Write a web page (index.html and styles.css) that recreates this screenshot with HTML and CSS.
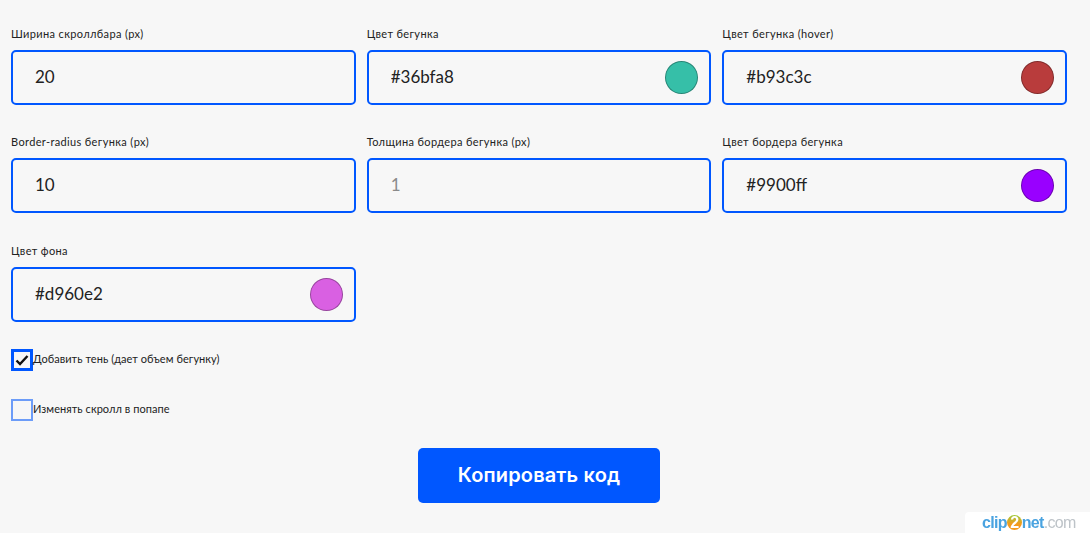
FILE: index.html
```html
<!DOCTYPE html>
<html lang="en">
<head>
    <meta charset="UTF-8">
    <meta name="viewport" content="width=device-width, initial-scale=1.0">
    <title>Scrollbar Generator</title>
    <link rel="stylesheet" href="styles.css">
</head>
<body>
    <div class="generator">
        <div class="fields">
            <div class="field">
                <label class="field-label">Ширина скроллбара (px)</label>
                <div class="field-box"><input class="field-input" type="text" value="20"></div>
            </div>
            <div class="field">
                <label class="field-label">Цвет бегунка</label>
                <div class="field-box">
                    <input class="field-input" type="text" value="#36bfa8">
                    <span class="swatch swatch-thumb"></span>
                </div>
            </div>
            <div class="field">
                <label class="field-label">Цвет бегунка (hover)</label>
                <div class="field-box">
                    <input class="field-input" type="text" value="#b93c3c">
                    <span class="swatch swatch-hover"></span>
                </div>
            </div>
            <div class="field">
                <label class="field-label">Border-radius бегунка (px)</label>
                <div class="field-box"><input class="field-input" type="text" value="10"></div>
            </div>
            <div class="field">
                <label class="field-label">Толщина бордера бегунка (px)</label>
                <div class="field-box"><input class="field-input" type="text" placeholder="1"></div>
            </div>
            <div class="field">
                <label class="field-label">Цвет бордера бегунка</label>
                <div class="field-box">
                    <input class="field-input" type="text" value="#9900ff">
                    <span class="swatch swatch-border"></span>
                </div>
            </div>
            <div class="field">
                <label class="field-label">Цвет фона</label>
                <div class="field-box">
                    <input class="field-input" type="text" value="#d960e2">
                    <span class="swatch swatch-bg"></span>
                </div>
            </div>
        </div>

        <div class="check-row">
            <span class="check-box">
                <svg width="14" height="14" viewBox="0 0 14 14"><path d="M1.5 7.5 L5 11 L12.5 3" fill="none" stroke="#111" stroke-width="2.4"/></svg>
            </span>
            <span class="check-label">Добавить тень (дает объем бегунку)</span>
        </div>
        <div class="check-row">
            <span class="check-box check-off"></span>
            <span class="check-label">Изменять скролл в попапе</span>
        </div>

        <div class="actions">
            <button class="copy-btn">Копировать код</button>
        </div>
    </div>

    <div class="watermark"><span class="wm-blue">clip</span><span class="wm-two">2</span><span class="wm-blue">net</span><span class="wm-gray">.com</span></div>
</body>
</html>
```

FILE: styles.css
```css
body {
    margin: 0;
    height: 533px;
    overflow: hidden;
    background-color: #f7f7f7;
    font-family: Lato, "Noto Sans", sans-serif;
    color: #222;
}

.generator {
    width: 1056px;
    padding: 27px 0 0 11px;
}

.fields {
    display: grid;
    grid-template-columns: repeat(3, 1fr);
    column-gap: 11px;
    row-gap: 30.4px;
}

.field-label {
    display: block;
    height: 23px;
    font-size: 11px;
    line-height: 14px;
    letter-spacing: 0.36px;
}

.field-box {
    display: flex;
    align-items: center;
    height: 55px;
    box-sizing: border-box;
    padding: 0 11px 0 22px;
    border: 2px solid #0057ff;
    border-radius: 5px;
}

.field-input {
    flex: 1;
    min-width: 0;
    padding: 0 0 2px;
    border: none;
    outline: none;
    background: transparent;
    font-family: inherit;
    font-size: 17px;
    color: #222;
}

.field-input::placeholder {
    color: #8a8a8a;
    opacity: 1;
}

.swatch {
    width: 33px;
    height: 33px;
    box-sizing: border-box;
    border-radius: 50%;
    border: 1px solid rgba(0, 0, 0, 0.3);
}

.swatch-thumb { background-color: #36bfa8; }
.swatch-hover { background-color: #b93c3c; }
.swatch-border { background-color: #9900ff; }
.swatch-bg { background-color: #d960e2; }

.check-row {
    display: flex;
    align-items: center;
    height: 22px;
    margin-top: 28px;
}

.fields + .check-row {
    margin-top: 27px;
}

.check-box {
    display: flex;
    align-items: center;
    justify-content: center;
    width: 22px;
    height: 22px;
    box-sizing: border-box;
    border: 3px solid #0057ff;
}

.check-off {
    border: 2px solid #6c9cf8;
}

.check-label {
    padding-bottom: 2px;
    font-size: 11px;
    letter-spacing: 0.06px;
}

.actions {
    display: flex;
    justify-content: center;
    margin-top: 27px;
}

.copy-btn {
    width: 242px;
    height: 55px;
    border: none;
    border-radius: 5px;
    background-color: #0057ff;
    color: #fff;
    font-family: Inter, sans-serif;
    font-size: 20px;
    font-weight: 600;
    letter-spacing: 0.15px;
}

.watermark {
    position: absolute;
    right: 0;
    top: 512px;
    width: 108px;
    height: 21px;
    padding-left: 17px;
    background-color: #fff;
    border-radius: 4px 0 0 0;
    font-family: "Liberation Sans", sans-serif;
    font-size: 16px;
    line-height: 21px;
    letter-spacing: -0.7px;
    filter: blur(0.5px);
}

.wm-blue {
    color: #4aa3e0;
    font-weight: bold;
}

.wm-two {
    display: inline-block;
    width: 15px;
    height: 15px;
    border-radius: 50%;
    background: linear-gradient(#9ccb3a, #f39a1e 60%);
    color: #fff;
    font-weight: bold;
    line-height: 15px;
    text-align: center;
}

.wm-gray {
    color: #bdc3c8;
}
```
